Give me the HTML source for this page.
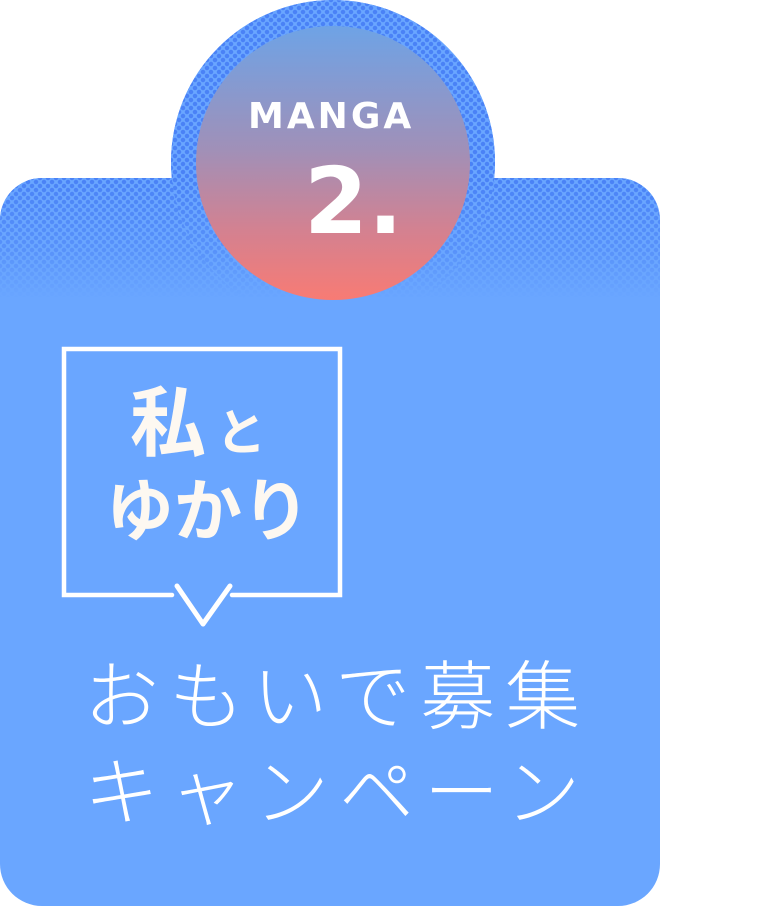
<!DOCTYPE html>
<html><head><meta charset="utf-8"><style>
html,body{margin:0;padding:0;background:#fff;width:757px;height:908px;overflow:hidden;position:relative;font-family:"Liberation Sans","Noto Sans CJK JP",sans-serif}
.dots{background-color:#6aa6ff;background-image:radial-gradient(circle,#4a82f6 2px,transparent 2.5px),radial-gradient(circle,#4a82f6 2px,transparent 2.5px);background-size:8px 8px;background-position:0 0,4px 4px}
#card{position:absolute;left:0;top:178px;width:660px;height:728px;border-radius:42px;background:#6aa6ff;overflow:hidden}
#cardtop{position:absolute;left:0;top:0;width:660px;height:120px;-webkit-mask-image:linear-gradient(#000 0%,rgba(0,0,0,.55) 60%,rgba(0,0,0,0) 100%);mask-image:linear-gradient(#000 0%,rgba(0,0,0,.55) 60%,rgba(0,0,0,0) 100%)}
#outer{position:absolute;left:171px;top:0px;width:324px;height:324px;border-radius:50%;overflow:hidden;background:#6aa6ff}
#outer .d{position:absolute;inset:0;-webkit-mask-image:linear-gradient(#000 0,#000 178px,rgba(0,0,0,.55) 250px,rgba(0,0,0,0) 298px);mask-image:linear-gradient(#000 0,#000 178px,rgba(0,0,0,.55) 250px,rgba(0,0,0,0) 298px)}
#inner{position:absolute;left:196px;top:26px;width:274px;height:274px;border-radius:50%;background:linear-gradient(#6ea3e6,#a090b8 45%,#d48190 75%,#f87b74)}
.w{position:absolute;color:#fff;font-weight:bold}
.c{position:absolute;color:#fdf8f1;font-weight:bold;white-space:nowrap}
.l{position:absolute;color:#fff;font-weight:300;font-size:75px;letter-spacing:10px;white-space:nowrap}
</style></head><body>
<div id="card"><div id="cardtop" class="dots"></div></div>
<div id="outer"><div class="d dots"></div></div>
<div id="inner"></div>
<div class="w" style="left:248px;top:96px;font-size:36px;letter-spacing:3px;font-family:'DejaVu Sans',sans-serif">MANGA</div>
<div class="w" style="left:304px;top:148px;font-size:92px;font-family:'DejaVu Sans',sans-serif">2.</div>
<svg style="position:absolute;left:0;top:0" width="757" height="908">
<path d="M172 595 H64 V349 H340 V595 H232" fill="none" stroke="#fff" stroke-width="4.5" stroke-linecap="round"/>
<path d="M177 586 L203 624 L230 586" fill="none" stroke="#fff" stroke-width="5" stroke-linecap="round" stroke-linejoin="round"/>
</svg>
<div class="c" style="left:130px;top:380px;font-size:76px;line-height:90px">私<span style="font-size:50px;margin-left:10px">と</span></div>
<div class="c" style="left:106px;top:470px;font-size:68px;line-height:84px">ゆかり</div>
<div class="l" style="left:84px;top:652px;line-height:90px">おもいで募集</div>
<div class="l" style="left:84px;top:748px;line-height:90px">キャンペーン</div>
</body></html>
